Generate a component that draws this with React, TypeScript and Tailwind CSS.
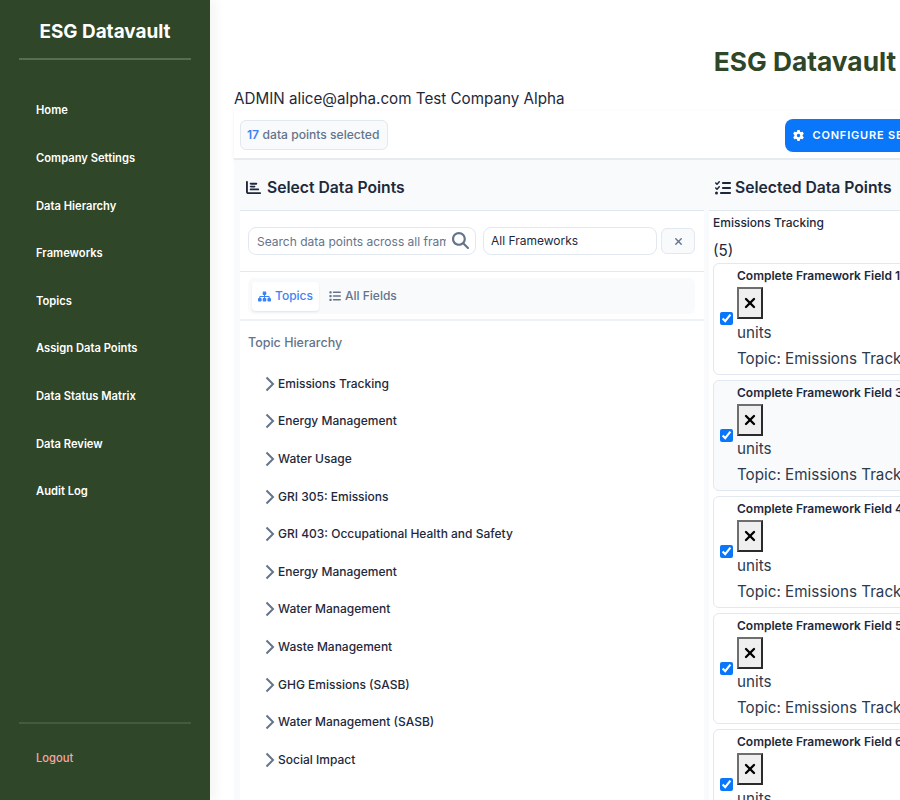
import { FaChartBar, FaGear, FaList, FaListCheck, FaMagnifyingGlass, FaSitemap, FaXmark } from "react-icons/fa6"
import { X } from "lucide-react"

const navItems = [
  "Home",
  "Company Settings",
  "Data Hierarchy",
  "Frameworks",
  "Topics",
  "Assign Data Points",
  "Data Status Matrix",
  "Data Review",
  "Audit Log",
]

const topics = [
  "Emissions Tracking",
  "Energy Management",
  "Water Usage",
  "GRI 305: Emissions",
  "GRI 403: Occupational Health and Safety",
  "Energy Management",
  "Water Management",
  "Waste Management",
  "GHG Emissions (SASB)",
  "Water Management (SASB)",
  "Social Impact",
]

const fields = [
  { num: 1, alt: false },
  { num: 3, alt: true },
  { num: 4, alt: false },
  { num: 5, alt: false },
  { num: 6, alt: false },
]

export default function App() {
  return (
    <div className="flex h-[800px] w-[900px] overflow-hidden bg-white font-['Inter',sans-serif] text-[#1e293b]">
      <Sidebar />
      <Main />
    </div>
  )
}

function Sidebar() {
  return (
    <aside className="z-10 flex h-[800px] w-[210px] shrink-0 flex-col bg-[#2f4628] px-[19px] shadow-[4px_0_12px_rgba(30,41,59,0.06)]">
      <h1 className="h-[60px] border-b-2 border-[#5a6c54] pt-[20px] text-center text-[18.9px] leading-[24px] font-bold text-white">
        ESG Datavault
      </h1>
      <nav className="flex flex-1 flex-col pt-[27px]">
        {navItems.map((item) => (
          <a key={item} className="flex h-[47.6px] items-center pl-[17px] text-[11.2px] font-semibold text-white">
            {item}
          </a>
        ))}
      </nav>
      <div className="h-[78px] border-t-2 border-[#465a40] pt-[24px] pl-[17px] text-[11.2px] leading-[20px] font-medium text-[#fca5a5]">
        Logout
      </div>
    </aside>
  )
}

function Main() {
  return (
    <main className="w-[1166px] shrink-0 pt-[42px] pl-[24px]">
      <div className="text-center text-[26.3px] leading-[40px] font-bold text-[#2f4628]">ESG Datavault</div>
      <p className="mt-[5px] text-[15.2px] leading-[24px]">ADMIN alice@alpha.com Test Company Alpha</p>
      <Toolbar />
      <div className="flex gap-[5px] bg-[#f8fafc] px-[6px] pt-[5px]">
        <SelectPanel />
        <SelectedPanel />
      </div>
    </main>
  )
}

function Toolbar() {
  return (
    <div className="flex h-[49px] items-center justify-between border-b-2 border-[#e7ebf0] pt-[9px] pr-[403px] pb-[8px] pl-[6px] shadow-[0_1px_3px_rgba(30,41,59,0.08)]">
      <div className="flex h-[30px] w-[148px] items-center rounded-[6px] border border-[#e2e8f0] bg-[#f8fafc] px-[6px] text-[12.1px] font-medium text-[#64748b]">
        <span className="mr-[3.5px] font-semibold text-[#3b82f6]">17</span>
        data points selected
      </div>
      <button className="flex h-[33px] items-center gap-[9px] rounded-[8px] bg-[#0a77fb] px-[8px] text-[11px] font-semibold tracking-[0.8px] text-white">
        <FaGear className="text-[11px]" />
        CONFIGURE SELECTIONS
      </button>
    </div>
  )
}

function PanelHeader({ icon, title, gap }: { icon: React.ReactNode; title: string; gap: string }) {
  return (
    <div className="flex h-[46px] items-center border-b border-[#e2e8f0] bg-[#f8fafc] px-[6px] text-[15.7px] font-semibold text-[#1e293b]">
      {icon}
      <span className={gap}>{title}</span>
    </div>
  )
}

function SelectPanel() {
  return (
    <section className="w-[464px] shrink-0 bg-white">
      <PanelHeader icon={<FaChartBar className="text-[15px]" />} title="Select Data Points" gap="ml-[6px]" />
      <div className="flex h-[61px] items-center gap-[7px] border-b border-[#e2e8f0] pr-[9px] pl-[8px]">
        <div className="relative h-[28px] w-[228px]">
          <input
            placeholder="Search data points across all frameworks"
            className="h-full w-full rounded-[8px] border border-[#e2e8f0] pr-[29px] pl-[8px] text-[12px] outline-none placeholder:text-[#64748b]"
          />
          <FaMagnifyingGlass className="absolute top-[5px] right-[7px] text-[17px] text-[#64748b]" />
        </div>
        <select className="h-[28px] w-[174px] appearance-none rounded-[8px] border border-[#e2e8f0] bg-white px-[7px] text-[12px] text-[#1e293b]">
          <option>All Frameworks</option>
        </select>
        <button className="-ml-[3px] flex h-[26px] w-[34px] items-center justify-center rounded-[6px] border border-[#e2e8f0] bg-[#f8fafc] text-[#64748b]">
          <FaXmark className="text-[11px]" />
        </button>
      </div>
      <div className="h-[49px] border-b-2 border-[#eef1f5] pt-[6px] pr-[9px] pl-[8px]">
        <div className="flex h-[36px] items-center gap-[4px] rounded-[6px] bg-[#f8fafc] px-[4px] text-[12px] font-medium">
          <div className="flex h-[29px] items-center gap-[4px] rounded-[4px] bg-white px-[6px] text-[#3b82f6] shadow-[0_1px_2px_rgba(30,41,59,0.1)]">
            <FaSitemap className="text-[13px]" />
            Topics
          </div>
          <div className="flex items-center gap-[4px] px-[6px] text-[#64748b]">
            <FaList className="text-[12px]" />
            All Fields
          </div>
        </div>
      </div>
      <h3 className="mt-[13px] ml-[8px] text-[12.5px] leading-[18px] font-medium text-[#64748b]">Topic Hierarchy</h3>
      <ul className="mt-[13px] pl-[25px]">
        {topics.map((topic, i) => (
          <li key={i} className="flex h-[37.6px] items-center gap-[3px] text-[12px] font-medium text-[#1e293b]">
            <svg width="10" height="16" viewBox="0 0 10 16" fill="none" stroke="#64748b" strokeWidth="2">
              <path d="M1.5 1.5 8 8l-6.5 6.5" />
            </svg>
            {topic}
          </li>
        ))}
      </ul>
    </section>
  )
}

function SelectedPanel() {
  return (
    <section className="flex-1 bg-white">
      <PanelHeader icon={<FaListCheck className="text-[16px]" />} title="Selected Data Points" gap="ml-[4px]" />
      <div className="px-[4px]">
        <div className="mt-[3px] text-[12px] leading-[18px] font-medium">Emissions Tracking</div>
        <div className="mt-[7px] text-[15.2px] leading-[24px]">(5)</div>
        <div className="flex flex-col gap-[5px]">
          {fields.map((field) => (
            <FieldCard key={field.num} num={field.num} alt={field.alt} />
          ))}
        </div>
      </div>
    </section>
  )
}

function FieldCard({ num, alt }: { num: number; alt: boolean }) {
  return (
    <div className={`flex h-[111.5px] items-center gap-[4px] rounded-[6px] border border-[#e2e8f0] px-[6px] ${alt ? "bg-[#f8fafc]" : "bg-white"}`}>
      <input type="checkbox" checked readOnly className="h-[13px] w-[13px] shrink-0 accent-[#0a77fb]" />
      <div className="whitespace-nowrap">
        <div className="text-[12px] leading-[18px] font-semibold">Complete Framework Field {num}</div>
        <button className="mt-[2px] flex h-[32px] w-[26px] items-center justify-center border-2 border-t-[#6e6e6e] border-r-[#2b2b2b] border-b-[#2b2b2b] border-l-[#6e6e6e] bg-[#efefef] text-black">
          <X size={16} strokeWidth={3.5} />
        </button>
        <div className="mt-[1.5px] text-[15.2px] leading-[24px] text-[#2d3a4e]">units</div>
        <div className="mt-[2px] text-[15.2px] leading-[24px] text-[#2d3a4e]">Topic: Emissions Tracking</div>
      </div>
    </div>
  )
}
